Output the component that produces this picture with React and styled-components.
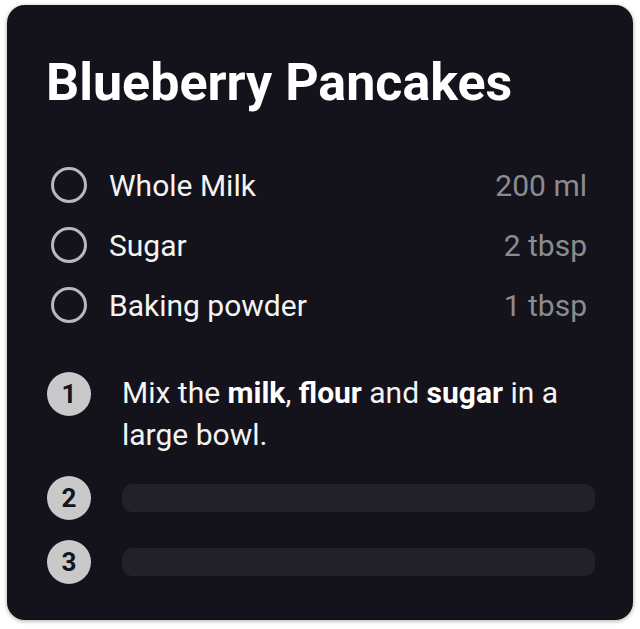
import React from 'react'
import styled, { createGlobalStyle } from 'styled-components'

const GlobalStyle = createGlobalStyle`
  html, body {
    margin: 0;
    padding: 0;
    background: #ffffff;
    font-family: Roboto, "Liberation Sans", sans-serif;
  }
`

const ingredients = [
    { name: 'Whole Milk', amount: '200 ml' },
    { name: 'Sugar', amount: '2 tbsp' },
    { name: 'Baking powder', amount: '1 tbsp' },
]

function App() {
    return (<>
        <GlobalStyle />
        <Page>
            <Card>
                <Title>Blueberry Pancakes</Title>
                <Ingredients>
                    {ingredients.map(item => (
                        <Ingredient key={item.name}>
                            <Check />
                            <Name>{item.name}</Name>
                            <Amount>{item.amount}</Amount>
                        </Ingredient>
                    ))}
                </Ingredients>
                <Steps>
                    <Step>
                        <Badge>1</Badge>
                        <StepText>
                            Mix the <b>milk</b>, <b>flour</b> and <b>sugar</b> in a large bowl.
                        </StepText>
                    </Step>
                    <Step>
                        <Badge>2</Badge>
                        <Placeholder />
                    </Step>
                    <Step>
                        <Badge>3</Badge>
                        <Placeholder />
                    </Step>
                </Steps>
            </Card>
        </Page>
    </>)
}

export default App

const Page = styled.div`
padding:5px 7px 9px 7px;
`
const Card = styled.div`
box-sizing:border-box;
width:626px;
height:615px;
background-color:#14131c;
border-radius:18px;
box-shadow:0 1px 4px rgba(0,0,0,0.35);
padding:48px 46px 0px 44px;
color:#f4f4f4;
`
const Title = styled.h1`
margin:0 0 0 -5px;
font-size:52px;
line-height:60px;
font-weight:700;
color:#ffffff;
`
const Ingredients = styled.div`
display:flex;
flex-direction:column;
margin-top:42px;
`
const Ingredient = styled.div`
display:flex;
align-items:center;
height:60px;
`
const Check = styled.div`
box-sizing:border-box;
width:36px;
height:36px;
border-radius:50%;
border:3px solid #b9b9bb;
margin-right:22px;
`
const Name = styled.span`
flex:1;
font-size:30px;
color:#f4f4f4;
`
const Amount = styled.span`
font-size:30px;
color:#8c8b90;
`
const Steps = styled.div`
display:flex;
flex-direction:column;
gap:20px;
margin-top:37px;
margin-left:-4px;
`
const Step = styled.div`
display:flex;
align-items:flex-start;
`
const Badge = styled.div`
flex:none;
width:44px;
height:44px;
border-radius:50%;
background-color:#c9c9cb;
color:#15141c;
font-weight:700;
font-size:26px;
display:flex;
align-items:center;
justify-content:center;
margin-right:31px;
`
const StepText = styled.div`
font-size:30px;
line-height:42px;
color:#f4f4f4;
max-width:470px;
b{
    font-weight:700;
    color:#ffffff;
}
`
const Placeholder = styled.div`
flex:1;
height:28px;
margin-top:8px;
margin-right:-8px;
border-radius:10px;
background-color:#222127;
`
